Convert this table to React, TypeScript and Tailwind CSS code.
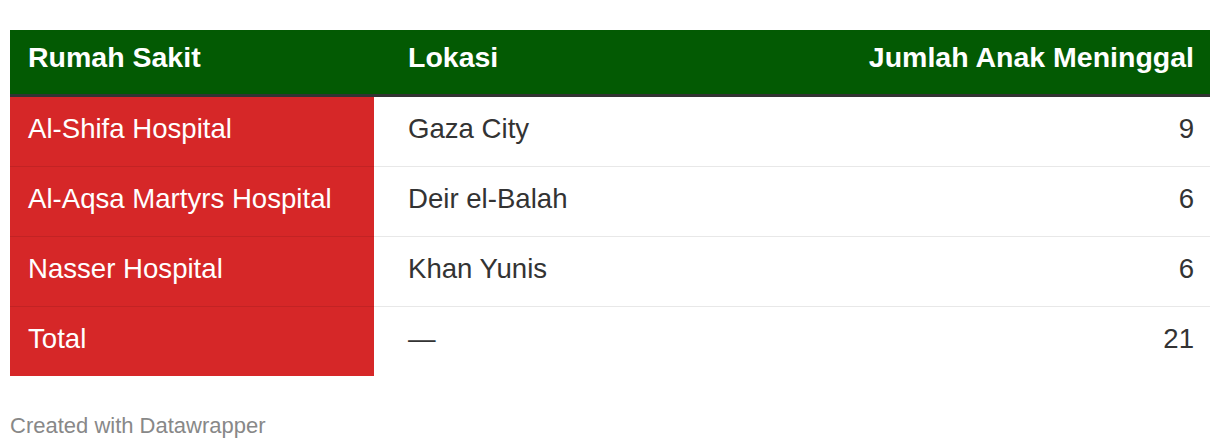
import React from 'react';

interface Row {
  hospital: string;
  location: string;
  count: string;
}

const rows: Row[] = [
  { hospital: 'Al-Shifa Hospital', location: 'Gaza City', count: '9' },
  { hospital: 'Al-Aqsa Martyrs Hospital', location: 'Deir el-Balah', count: '6' },
  { hospital: 'Nasser Hospital', location: 'Khan Yunis', count: '6' },
  { hospital: 'Total', location: '—', count: '21' },
];

export default function App() {
  return (
    <div
      className="w-[1220px] h-[448px] bg-white px-[10px] pt-[30px]"
      style={{ fontFamily: '"Liberation Sans", Arial, Helvetica, sans-serif' }}
    >
      {/* Header */}
      <div className="flex h-[64px] bg-[#035a03] border-b-[3px] border-[#333333] box-content text-white font-bold text-[28.5px]">
        <div className="w-[364px] flex items-center pl-[18px] pb-[9px]">Rumah Sakit</div>
        <div className="flex-1 flex items-center pl-[34px] pb-[9px]">Lokasi</div>
        <div className="flex items-center justify-end pr-[16px] pb-[9px]">Jumlah Anak Meninggal</div>
      </div>

      {/* Body */}
      <div className="flex flex-col text-[27.6px] text-[#333333]">
        {rows.map((row, i) => {
          const line = i === 0 ? 'h-[69px]' : 'h-[70px] border-t border-black/[0.09]';
          return (
            <div key={row.hospital} className="flex">
              <div className={`w-[364px] flex items-center pl-[18px] pb-[6px] bg-[#d62728] text-white ${line}`}>
                {row.hospital}
              </div>
              <div className={`flex-1 flex items-center pl-[34px] pb-[6px] ${line}`}>{row.location}</div>
              <div className={`flex items-center justify-end pr-[16px] pb-[6px] ${line}`}>{row.count}</div>
            </div>
          );
        })}
      </div>

      {/* Footer */}
      <div className="mt-[37px] text-[22px] leading-[25px] text-[#888888]">Created with Datawrapper</div>
    </div>
  );
}
